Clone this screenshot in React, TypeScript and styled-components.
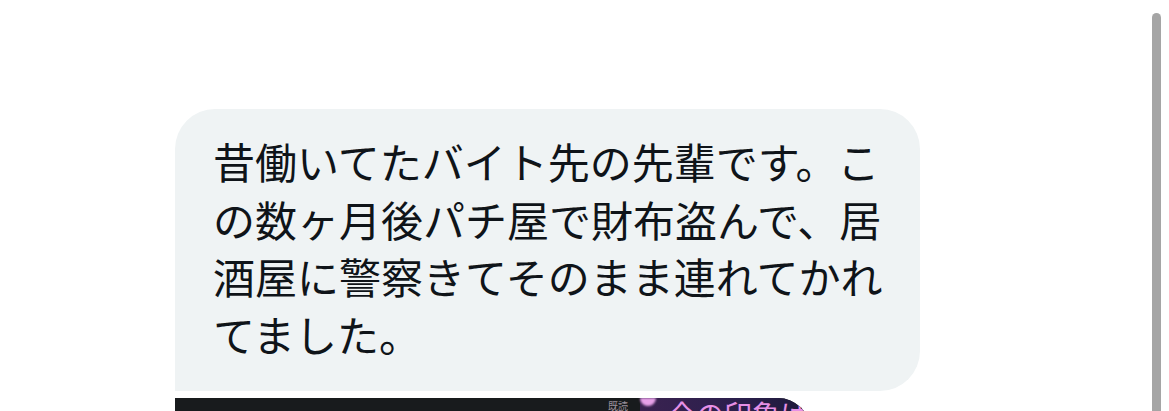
import React from 'react';
import styled, { createGlobalStyle } from 'styled-components';

const GlobalStyle = createGlobalStyle`
  html, body {
    margin: 0;
    padding: 0;
    background: #ffffff;
    overflow: hidden;
  }
  body {
    font-family: "Noto Sans CJK JP", "Noto Sans", sans-serif;
  }
`;

const Page = styled.div`
  width: 1169px;
  height: 411px;
  overflow: hidden;
  display: flex;
  flex-direction: column;
  align-items: flex-start;
  padding: 109px 0 0 175px;
  box-sizing: border-box;
`;

const Bubble = styled.div`
  width: 745px;
  box-sizing: border-box;
  padding: 23px 32px 29px 38px;
  background: #eff3f4;
  border-radius: 40px 40px 40px 0;
  color: #0f1419;
  font-size: 42px;
  line-height: 57.5px;
  letter-spacing: 0;
  line-break: strict;
`;

const Media = styled.div`
  margin-top: 7px;
  width: 635px;
  height: 60px;
  flex-shrink: 0;
  background: #181b1d;
  border-top-right-radius: 32px;
  display: flex;
  justify-content: flex-end;
  align-items: flex-start;
  overflow: hidden;
`;

const Label = styled.span`
  margin: 2px 12px 0 0;
  font-size: 10px;
  line-height: 12px;
  color: #9a8f9a;
`;

const Screen = styled.div`
  width: 170px;
  height: 100%;
  padding-left: 14px;
  box-sizing: border-box;
  background: linear-gradient(90deg, #3a2250 0%, #2a1f4c 60%, #1e1a3a 100%);
  position: relative;
`;

const Spark = styled.span`
  position: absolute;
  left: 0;
  top: 0;
  width: 16px;
  height: 8px;
  border-radius: 0 0 8px 8px;
  background: #e7a0e8;
  filter: blur(1px);
`;

const Caption = styled.div`
  padding-left: 14px;
  font-size: 28px;
  line-height: 32px;
  color: #e690e6;
  white-space: nowrap;
`;

const ScrollThumb = styled.div`
  position: fixed;
  left: 1152px;
  top: 13px;
  width: 9px;
  bottom: 0;
  background: #a5a5a5;
  border-radius: 5px 5px 0 0;
`;

export default function App() {
  return (
    <>
      <GlobalStyle />
      <Page>
        <Bubble>
          昔働いてたバイト先の先輩です。この数ヶ月後パチ屋で財布盗んで、居酒屋に警察きてそのまま連れてかれてました。
        </Bubble>
        <Media>
          <Label>既読</Label>
          <Screen>
            <Spark />
            <Caption>今の印象は</Caption>
          </Screen>
        </Media>
      </Page>
      <ScrollThumb />
    </>
  );
}
